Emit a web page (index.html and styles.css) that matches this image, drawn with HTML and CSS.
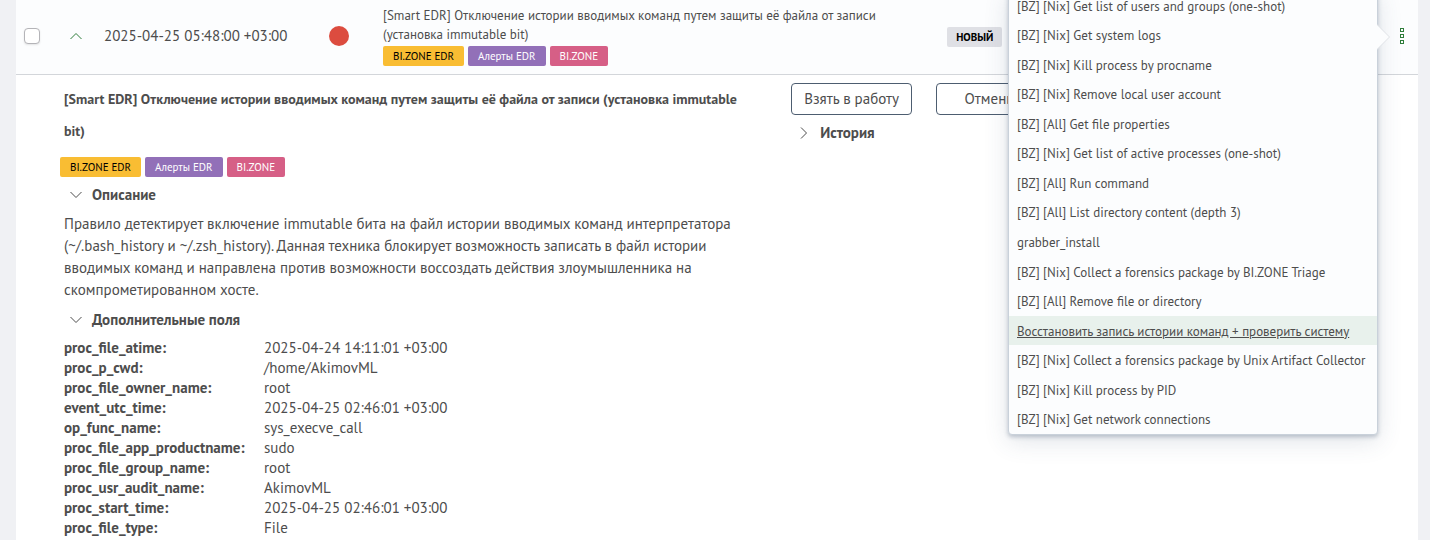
FILE: index.html
```html
<!DOCTYPE html>
<html lang="ru">
<head>
  <meta charset="UTF-8" />
  <meta name="viewport" content="width=device-width, initial-scale=1.0" />
  <title>Алерты</title>
  <link rel="stylesheet" href="styles.css">
</head>
<body>
  <main class="panel">
    <div class="alert-row">
      <input type="checkbox" class="alert-check" aria-label="Выбрать алерт" />
      <button class="icon-btn green" aria-label="Свернуть">
        <svg width="12" height="12" viewBox="0 0 12 12"><path d="M.5 9 6 3.5 11.500 9" /></svg>
      </button>
      <time class="alert-date">2025-04-25 05:48:00 +03:00</time>
      <span class="severity"></span>
      <div class="alert-name">
        <p>[Smart EDR] Отключение истории вводимых команд путем защиты её файла от записи (установка immutable bit)</p>
        <div class="tags">
          <span class="tag yellow">BI.ZONE EDR</span>
          <span class="tag purple">Алерты EDR</span>
          <span class="tag pink">BI.ZONE</span>
        </div>
      </div>
      <div class="alert-status"><span class="status">НОВЫЙ</span></div>

      <div class="actions">
        <button class="icon-btn green" aria-label="Действия">
          <svg width="4" height="16" viewBox="0 0 4 16" shape-rendering="crispEdges">
            <rect x=".5" y=".5" width="3" height="3" />
            <rect x=".5" y="6.500" width="3" height="3" />
            <rect x=".5" y="12.500" width="3" height="3" />
          </svg>
        </button>
        <div class="popover">
          <ul class="menu">
            <li><button>[BZ] [Nix] Get list of users and groups (one-shot)</button></li>
            <li><button>[BZ] [Nix] Get system logs</button></li>
            <li><button>[BZ] [Nix] Kill process by procname</button></li>
            <li><button>[BZ] [Nix] Remove local user account</button></li>
            <li><button>[BZ] [All] Get file properties</button></li>
            <li><button>[BZ] [Nix] Get list of active processes (one-shot)</button></li>
            <li><button>[BZ] [All] Run command</button></li>
            <li><button>[BZ] [All] List directory content (depth 3)</button></li>
            <li><button>grabber_install</button></li>
            <li><button>[BZ] [Nix] Collect a forensics package by BI.ZONE Triage</button></li>
            <li><button>[BZ] [All] Remove file or directory</button></li>
            <li><button class="active">Восстановить запись истории команд + проверить систему</button></li>
            <li><button>[BZ] [Nix] Collect a forensics package by Unix Artifact Collector</button></li>
            <li><button>[BZ] [Nix] Kill process by PID</button></li>
            <li><button>[BZ] [Nix] Get network connections</button></li>
          </ul>
          <svg class="arrow" width="14" height="26" viewBox="0 0 14 26"><path d="M0 .5 12.500 13 0 25.500" /></svg>
        </div>
      </div>
    </div>

    <div class="details">
      <section class="info">
        <h1>[Smart EDR] Отключение истории вводимых команд путем защиты её файла от записи (установка immutable bit)</h1>
        <div class="tags">
          <span class="tag yellow">BI.ZONE EDR</span>
          <span class="tag purple">Алерты EDR</span>
          <span class="tag pink">BI.ZONE</span>
        </div>

        <button class="toggle">
          <svg width="12" height="12" viewBox="0 0 12 12"><path d="M.5 3 6 8.500 11.500 3" /></svg>
          Описание
        </button>
        <p class="description">Правило детектирует включение immutable бита на файл истории вводимых команд интерпретатора (~/.bash_history и ~/.zsh_history). Данная техника блокирует возможность записать в файл истории вводимых команд и направлена против возможности воссоздать действия злоумышленника на скомпрометированном хосте.</p>

        <button class="toggle">
          <svg width="12" height="12" viewBox="0 0 12 12"><path d="M.5 3 6 8.500 11.500 3" /></svg>
          Дополнительные поля
        </button>
        <dl class="fields">
          <dt>proc_file_atime:</dt><dd>2025-04-24 14:11:01 +03:00</dd>
          <dt>proc_p_cwd:</dt><dd>/home/AkimovML</dd>
          <dt>proc_file_owner_name:</dt><dd>root</dd>
          <dt>event_utc_time:</dt><dd>2025-04-25 02:46:01 +03:00</dd>
          <dt>op_func_name:</dt><dd>sys_execve_call</dd>
          <dt>proc_file_app_productname:</dt><dd>sudo</dd>
          <dt>proc_file_group_name:</dt><dd>root</dd>
          <dt>proc_usr_audit_name:</dt><dd>AkimovML</dd>
          <dt>proc_start_time:</dt><dd>2025-04-25 02:46:01 +03:00</dd>
          <dt>proc_file_type:</dt><dd>File</dd>
        </dl>
      </section>

      <section class="side">
        <div class="buttons">
          <button class="btn">Взять в работу</button>
          <button class="btn">Отменить</button>
        </div>
        <button class="toggle">
          <svg width="12" height="12" viewBox="0 0 12 12"><path d="M3 .5 8.500 6 3 11.500" /></svg>
          История
        </button>
      </section>
    </div>
  </main>
</body>
</html>
```
FILE: styles.css
```css
* {
  box-sizing: border-box;
  margin: 0;
  padding: 0;
}

body {
  background-color: #f0f1f4;
  color: #4d4d4d;
  font-family: "PT Sans", "Noto Sans", sans-serif;
  font-size: 15px;
  line-height: 20px;
}

button {
  background: none;
  border: none;
  color: inherit;
  font: inherit;
  cursor: pointer;
}

svg {
  display: block;
  fill: none;
  stroke: currentColor;
}

.panel {
  min-height: 100vh;
  margin: 0 12px 0 16px;
  background-color: #fff;
}

/* alert row */

.alert-row {
  display: grid;
  grid-template-columns: 46px 34px 225px 54px 9fr 7fr 32px;
  align-items: center;
  padding: 0 0 2px 8px;
  min-height: 75px;
  background-color: #fcfdfe;
  border-bottom: 1px solid #d3d6da;
}

.alert-check {
  appearance: none;
  width: 16px;
  height: 16px;
  background-color: #fff;
  border: 1px solid #b4b4b8;
  border-radius: 4px;
  box-shadow: 0 1px 2px rgba(0, 0, 0, 0.1);
}

.icon-btn.green {
  color: #2f7d3b;
}

.severity {
  width: 20px;
  height: 20px;
  border-radius: 50%;
  background-color: #dc4c3f;
}

.alert-name p {
  max-width: 520px;
  margin-bottom: 2px;
  font-size: 13px;
  line-height: 19px;
}

.tags {
  display: flex;
  gap: 4px;
}

.tag,
.status {
  padding: 0 10px;
  border-radius: 2px;
  font-size: 11px;
  line-height: 20px;
}

.tag {
  color: #fff;
}

.tag.yellow {
  background-color: #f9bd33;
  color: #000;
}

.tag.purple {
  background-color: #9270b8;
}

.tag.pink {
  background-color: #d65f86;
}

.status {
  display: inline-block;
  padding: 0 9px;
  background-color: #dfe0e5;
  color: #000;
  font-weight: 700;
}

/* actions menu */

.actions {
  position: relative;
  display: flex;
  justify-content: center;
}

.popover {
  position: absolute;
  right: 40px;
  top: -38px;
  width: 370px;
  background-color: #fcfdfe;
  border: 1px solid #c9d1da;
  border-radius: 4px;
  box-shadow: 0 2px 4px rgba(60, 80, 110, 0.3), 0 6px 24px rgba(60, 80, 110, 0.16);
}

.menu {
  display: grid;
  grid-auto-rows: 1fr;
  height: 443px;
  list-style: none;
}

.menu button {
  width: 100%;
  height: 100%;
  padding: 2px 8px 0;
  font-size: 13px;
  text-align: left;
  white-space: nowrap;
}

.menu button:hover,
.menu .active {
  background-color: #e8f1ec;
  text-decoration: underline;
}

.arrow {
  position: absolute;
  left: 100%;
  top: 33px;
  fill: #fcfdfe;
  stroke: #dfe2e6;
}

/* alert details */

.details {
  display: grid;
  grid-template-columns: 7fr 6fr;
  padding: 8px 0 2px 44px;
}

.info h1 {
  max-width: 700px;
  padding-left: 4px;
  font-size: 14px;
  line-height: 32px;
  margin-bottom: 10px;
}

.toggle {
  display: flex;
  align-items: center;
  gap: 10px;
  padding: 0 10px;
  font-weight: 700;
  line-height: 36px;
}

.side .toggle {
  padding: 0 7px;
}

.description {
  max-width: 690px;
  padding: 0 4px;
  line-height: 22px;
  margin-bottom: 1px;
}

.fields {
  display: grid;
  grid-template-columns: 200px 1fr;
  padding: 0 4px;
}

.fields dt {
  font-weight: 700;
}

.buttons {
  display: flex;
  gap: 24px;
}

.btn {
  min-width: 120px;
  height: 32px;
  padding: 0 12px;
  background-color: #fff;
  border: 1px solid #4d5d70;
  border-radius: 4px;
}
```
